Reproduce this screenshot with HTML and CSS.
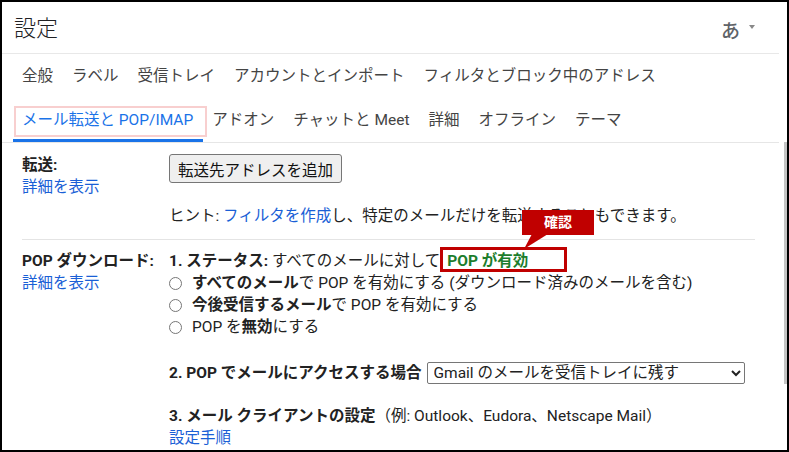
FILE: index.html
```html
<!DOCTYPE html>
<html lang="ja">
<head>
    <meta charset="UTF-8">
    <meta name="viewport" content="width=device-width, initial-scale=1.0">
    <title>設定</title>
    <link rel="stylesheet" href="styles.css">
</head>
<body>
    <div class="frame">
        <div class="main">
            <div class="header">
                <h1>設定</h1>
                <div class="ime">あ<span class="caret"></span></div>
            </div>

            <nav class="tabs">
                <div class="tab-row">
                    <a class="tab">全般</a>
                    <a class="tab">ラベル</a>
                    <a class="tab">受信トレイ</a>
                    <a class="tab">アカウントとインポート</a>
                    <a class="tab">フィルタとブロック中のアドレス</a>
                </div>
                <div class="tab-row">
                    <a class="tab active">メール転送と POP/IMAP</a>
                    <a class="tab">アドオン</a>
                    <a class="tab">チャットと Meet</a>
                    <a class="tab">詳細</a>
                    <a class="tab">オフライン</a>
                    <a class="tab">テーマ</a>
                </div>
            </nav>

            <div class="section forward">
                <div class="label-col">
                    <div class="label">転送:</div>
                    <a class="link">詳細を表示</a>
                </div>
                <div class="body-col">
                    <button type="button" class="btn">転送先アドレスを追加</button>
                    <p class="hint">ヒント: <a class="link">フィルタを作成</a>し、特定のメールだけを転送することもできます。</p>
                </div>
            </div>

            <div class="section pop">
                <div class="label-col">
                    <div class="label">POP ダウンロード:</div>
                    <a class="link">詳細を表示</a>
                </div>
                <div class="body-col">
                    <div class="line"><b>1. ステータス:</b> すべてのメールに対して<span class="status">POP が有効</span></div>
                    <label class="radio"><span class="dot"></span><span><b>すべてのメール</b>で POP を有効にする (ダウンロード済みのメールを含む)</span></label>
                    <label class="radio"><span class="dot"></span><span><b>今後受信するメール</b>で POP を有効にする</span></label>
                    <label class="radio"><span class="dot"></span><span>POP を<b>無効</b>にする</span></label>

                    <div class="line step2">
                        <b>2. POP でメールにアクセスする場合</b>
                        <select class="select">
                            <option>Gmail のメールを受信トレイに残す</option>
                        </select>
                    </div>

                    <div class="line step3"><b>3. メール クライアントの設定</b>（例: Outlook、Eudora、Netscape Mail）</div>
                    <a class="link line">設定手順</a>
                </div>
            </div>
        </div>

        <div class="callout">確認</div>
        <div class="scroll-thumb"></div>
    </div>
</body>
</html>
```

FILE: styles.css
```css
body {
    margin: 0;
    padding: 0;
    font-family: Roboto, "Noto Sans CJK JP", sans-serif;
    color: #222222;
    background: #ffffff;
}

.frame {
    position: relative;
    width: 789px;
    height: 452px;
    box-sizing: border-box;
    border: 2px solid #000000;
    overflow: hidden;
}

.main {
    width: 777px;
}

/* header */

.header {
    height: 51px;
    display: flex;
    align-items: center;
    justify-content: space-between;
    padding: 0 24px 0 12px;
    border-bottom: 1px solid #e8e8e8;
}

.header h1 {
    margin: 0;
    font-size: 22px;
    font-weight: 300;
    color: #202124;
    line-height: 1;
    padding-top: 2px;
}

.ime {
    display: flex;
    align-items: center;
    gap: 9px;
    font-size: 19px;
    font-weight: 500;
    color: #5f6368;
    padding-top: 4px;
}

.caret {
    width: 0;
    height: 0;
    border-left: 3px solid transparent;
    border-right: 3px solid transparent;
    border-top: 4px solid #888888;
    margin-top: -6px;
}

/* tabs */

.tabs {
    border-bottom: 1px solid #e6e6e6;
}

.tab-row {
    display: flex;
    gap: 19px;
    height: 44px;
    align-items: center;
    padding-left: 20px;
}

.tab {
    font-size: 15.5px;
    color: #444444;
    line-height: 44px;
    position: relative;
    white-space: nowrap;
}

.tab.active {
    color: #1a73e8;
}

.tab.active::before {
    content: "";
    position: absolute;
    left: -8px;
    top: 8px;
    width: 193px;
    height: 31px;
    box-sizing: border-box;
    border: 2px solid #f8cfcf;
}

.tab.active::after {
    content: "";
    position: absolute;
    left: -9px;
    bottom: 0;
    width: 190px;
    height: 3px;
    background: #1a73e8;
}

/* sections */

.section {
    display: flex;
    margin-left: 20px;
    width: 733px;
    font-size: 15.5px;
    line-height: 22px;
}

.label-col {
    width: 147px;
    flex-shrink: 0;
    display: flex;
    flex-direction: column;
    align-items: flex-start;
}

.label {
    font-weight: bold;
}

.link {
    color: #1a5fd6;
    text-decoration: none;
}

.body-col {
    display: flex;
    flex-direction: column;
    align-items: flex-start;
}

.forward {
    padding: 11px 0 12px;
    border-bottom: 1px solid #e4e4e4;
}

.btn {
    height: 29px;
    padding: 0 8px;
    font-family: Roboto, "Noto Sans CJK JP", sans-serif;
    font-size: 15.5px;
    color: #111111;
    background: #efefef;
    border: 1px solid #767676;
    border-radius: 3px;
}

.hint {
    margin: 22px 0 0;
}

.pop {
    padding-top: 10px;
}

.line {
    display: block;
}

.status {
    position: relative;
    display: inline-block;
    padding-left: 7px;
    color: #1c7d2c;
    font-weight: bold;
}

.status::before {
    content: "";
    position: absolute;
    left: 0;
    top: -3px;
    width: 127px;
    height: 25px;
    box-sizing: border-box;
    border: 3px solid #c00000;
}

.radio {
    display: flex;
    align-items: center;
    gap: 10px;
}

.dot {
    width: 13px;
    height: 13px;
    box-sizing: border-box;
    border: 1px solid #767676;
    border-radius: 50%;
    margin-top: 1px;
}

.step2 {
    margin-top: 24px;
    display: flex;
    align-items: center;
    gap: 5px;
}

.select {
    width: 318px;
    height: 22px;
    font-family: Roboto, "Noto Sans CJK JP", sans-serif;
    font-size: 15.5px;
    color: #222222;
    border: 1px solid #767676;
    border-radius: 2px;
    background: #ffffff;
    padding: 0 2px;
}

.step3 {
    margin-top: 21px;
}

/* annotation */

.callout {
    position: absolute;
    left: 520px;
    top: 208px;
    width: 72px;
    height: 25px;
    background: #c00000;
    color: #ffffff;
    font-size: 14px;
    font-weight: bold;
    line-height: 25px;
    text-align: center;
}

.callout::after {
    content: "";
    position: absolute;
    left: 2px;
    top: 24px;
    width: 24px;
    height: 15px;
    background: #c00000;
    clip-path: polygon(8px 0, 24px 0, 0 100%);
}

.scroll-thumb {
    position: absolute;
    right: 0;
    top: 140px;
    width: 3px;
    height: 242px;
    background: #c4c4c4;
}
```
